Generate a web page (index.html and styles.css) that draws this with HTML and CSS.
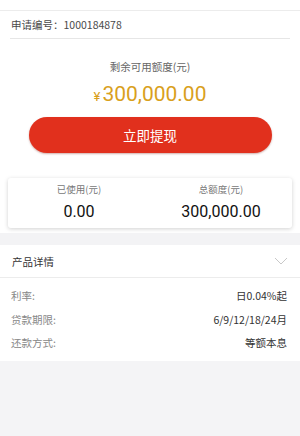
FILE: index.html
```html
<!DOCTYPE html>
<html lang="zh-CN">
<head>
    <meta charset="UTF-8">
    <meta name="viewport" content="width=device-width, initial-scale=1.0">
    <title>额度详情</title>
    <link rel="stylesheet" href="styles.css">
</head>
<body>
    <div class="page">
        <div class="top-strip"></div>

        <div class="apply-no">申请编号：1000184878</div>

        <div class="quota">
            <div class="quota-label">剩余可用额度(元)</div>
            <div class="quota-amount"><span class="yen">¥</span>300,000.00</div>
            <button class="btn-withdraw">立即提现</button>
        </div>

        <div class="summary">
            <div class="summary-item">
                <div class="summary-label">已使用(元)</div>
                <div class="summary-value">0.00</div>
            </div>
            <div class="summary-item">
                <div class="summary-label">总额度(元)</div>
                <div class="summary-value">300,000.00</div>
            </div>
        </div>

        <div class="gap"></div>

        <div class="detail">
            <div class="detail-head">
                <span>产品详情</span>
                <svg class="chevron" width="14" height="8" viewBox="0 0 14 8">
                    <path d="M1 1 L7 7 L13 1" fill="none" stroke="#c8c8c8" stroke-width="1"/>
                </svg>
            </div>
            <div class="detail-rows">
                <div class="row"><span class="row-key">利率:</span><span class="row-val">日0.04%起</span></div>
                <div class="row"><span class="row-key">贷款期限:</span><span class="row-val">6/9/12/18/24月</span></div>
                <div class="row"><span class="row-key">还款方式:</span><span class="row-val">等额本息</span></div>
            </div>
        </div>

        <div class="bottom"></div>
    </div>
</body>
</html>
```

FILE: styles.css
```css
/* Reset */
* {
    margin: 0;
    padding: 0;
    box-sizing: border-box;
}

body {
    font-family: 'Noto Sans CJK SC', 'Noto Sans', sans-serif;
    background-color: #f4f4f6;
    color: #333333;
    width: 300px;
    height: 436px;
    overflow: hidden;
}

.page {
    display: flex;
    flex-direction: column;
    height: 100%;
    background-color: #ffffff;
}

.top-strip {
    height: 11px;
    border-bottom: 1px solid #ececec;
}

.apply-no {
    margin: 0 10px;
    padding-left: 1px;
    height: 28px;
    line-height: 27px;
    font-size: 10.5px;
    color: #4a4a4a;
    border-bottom: 1px solid #e6e6e6;
}

.quota {
    display: flex;
    flex-direction: column;
    align-items: center;
    padding-top: 19px;
}

.quota-label {
    font-size: 10.5px;
    line-height: 18px;
    color: #666666;
}

.quota-amount {
    margin-top: 5px;
    font-family: 'Roboto', 'Noto Sans', sans-serif;
    font-size: 21px;
    line-height: 26px;
    color: #d9a01c;
}

.yen {
    font-size: 13px;
    margin-right: 2px;
}

.btn-withdraw {
    margin-top: 7px;
    width: 243px;
    height: 36px;
    border: none;
    border-radius: 18px;
    background-color: #e1301d;
    color: #ffffff;
    font-family: inherit;
    font-size: 13.5px;
    box-shadow: 0 1px 2px rgba(120, 20, 10, 0.35);
}

.summary {
    display: flex;
    margin: 25px 8px 0;
    height: 50px;
    background-color: #ffffff;
    border-radius: 3px;
    box-shadow: 0 1px 4px rgba(0, 0, 0, 0.18);
}

.summary-item {
    flex: 1;
    display: flex;
    flex-direction: column;
    align-items: center;
    padding-top: 4px;
}

.summary-label {
    font-size: 9.5px;
    line-height: 15px;
    color: #777777;
}

.summary-value {
    margin-top: 4px;
    font-family: 'Roboto', 'Noto Sans', sans-serif;
    font-size: 16px;
    line-height: 22px;
    color: #111111;
}

.gap {
    height: 12px;
    margin-top: 5px;
    background-color: #f3f3f5;
}

.detail-head {
    display: flex;
    justify-content: space-between;
    align-items: center;
    height: 33px;
    padding: 0 11px 0 12px;
    font-size: 10.5px;
    color: #333333;
    border-bottom: 1px solid #ececec;
}

.chevron {
    margin-right: 1px;
}

.detail-rows {
    padding: 6px 13px 6px 11px;
}

.row {
    display: flex;
    justify-content: space-between;
    height: 23.5px;
    line-height: 23px;
    font-size: 10.5px;
}

.row-key {
    color: #888888;
}

.row-val {
    color: #333333;
}

.bottom {
    flex: 1;
    background-color: #f4f4f6;
}
```
